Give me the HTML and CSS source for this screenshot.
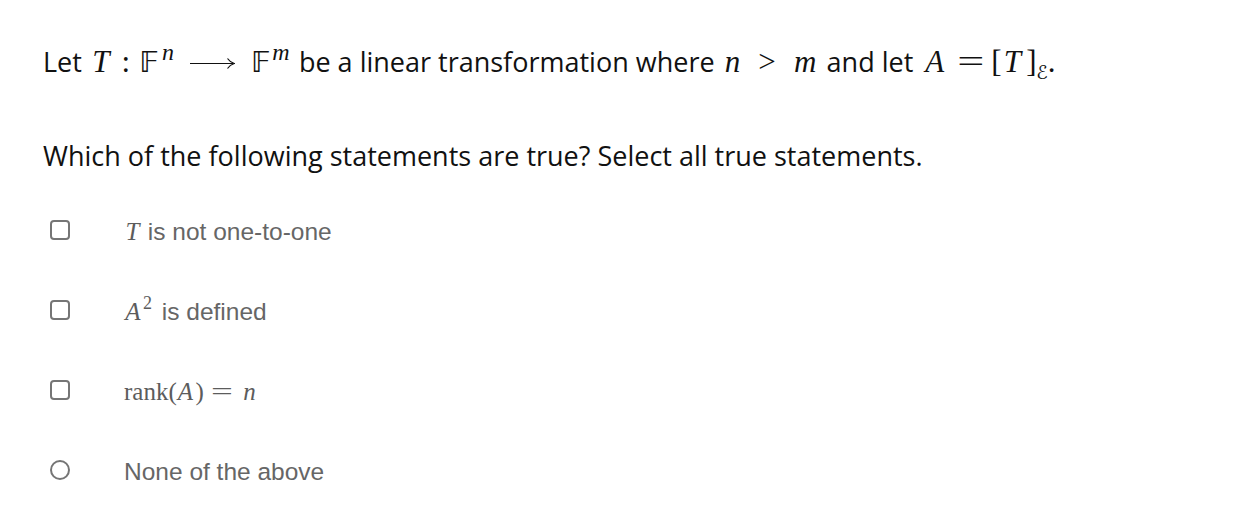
FILE: index.html
```html
<!DOCTYPE html>
<html>
<head>
<meta charset="utf-8">
<link rel="stylesheet" href="styles.css">
</head>
<body>
<div class="question">
  <p class="stem">Let <span class="m"><span class="g i w24">T</span><span class="g w26">:</span><span class="g bb w20">𝔽</span><span class="g sup i w18">n</span><span class="arrow"><svg width="45" height="14" viewBox="0 0 45 14"><path d="M0 7.5 H43.5" stroke="#111" stroke-width="1.2" fill="none"/><path d="M37.5 2.5 Q40 6.2 44.3 7.5 Q40 8.8 37.5 12.5" stroke="#111" stroke-width="1.2" fill="none"/></svg></span><span class="g bb w19">𝔽</span><span class="g sup i w22">m</span></span> be a linear transformation where <span class="m"><span class="g i w22">n</span><span class="g w47">&gt;</span><span class="g i w29">m</span></span> and let <span class="m"><span class="g i w29">A</span><span class="g w42"><span class="eq">=</span></span><span class="g w7">[</span><span class="g i w28">T</span><span class="g w7">]</span><span class="g cal">ℰ</span><span class="g w6">.</span></span></p>
  <p class="prompt">Which of the following statements are true? Select all true statements.</p>
  <ul class="options">
    <li class="option"><span class="box"></span><span class="label"><span class="om"><span class="g i w17">T</span></span> is not one-to-one</span></li>
    <li class="option"><span class="box"></span><span class="label"><span class="om"><span class="g i w18">A</span><span class="g osup w13">2</span></span> is defined</span></li>
    <li class="option"><span class="box"></span><span class="label"><span class="om">rank<span class="g w7">(</span><span class="g i w20">A</span><span class="g w7">)</span><span class="g w40"><span class="eq">=</span></span><span class="g i w14">n</span></span></span></li>
    <li class="option"><span class="box radio"></span><span class="label">None of the above</span></li>
  </ul>
</div>
</body>
</html>
```
FILE: styles.css
```css
body {
  margin: 0;
  background: #fff;
  font-family: "Open Sans", "Noto Sans", sans-serif;
  color: #111;
}
.question {
  padding: 44px 0 0 43px;
}
.stem {
  margin: 0;
  font-size: 27px;
  line-height: 36px;
  white-space: nowrap;
}
.prompt {
  margin: 58px 0 0 0;
  font-size: 27px;
  line-height: 36px;
}
.m {
  font-family: "Liberation Serif", "DejaVu Serif", serif;
  font-size: 31px;
  line-height: 0;
}
.g {
  display: inline-block;
  text-align: center;
  line-height: 0;
}
.i { font-style: italic; }
.eq { display: inline-block; transform: scaleX(1.55); }
.m .sup { font-size: 24px; vertical-align: 12px; }
.bb { font-family: "DejaVu Sans", sans-serif; font-size: 29px; }
.arrow { display: inline-block; margin: 0 16px 0 13px; line-height: 0; }
.arrow svg { vertical-align: 2px; }
.cal {
  font-family: "DejaVu Sans", sans-serif;
  font-size: 19px;
  vertical-align: -7px;
  margin-left: 3px;
}
.w6 { width: 6px; }
.w7 { width: 7px; }
.w8 { width: 8px; }
.w13 { width: 13px; }
.w14 { width: 14px; }
.w17 { width: 17px; }
.w18 { width: 18px; }
.w19 { width: 19px; }
.w20 { width: 20px; }
.w22 { width: 22px; }
.w24 { width: 24px; }
.w26 { width: 26px; }
.w28 { width: 28px; }
.w29 { width: 29px; }
.w40 { width: 40px; }
.w42 { width: 42px; }
.w47 { width: 47px; }
.options {
  list-style: none;
  margin: 16px 0 0 0;
  padding: 0;
}
.option {
  display: flex;
  align-items: center;
  height: 80px;
}
.box {
  width: 16px;
  height: 16px;
  border: 2px solid #757575;
  border-radius: 4px;
  margin-left: 7px;
  flex: none;
}
.box.radio {
  border-radius: 50%;
}
.label {
  margin-left: 54px;
  padding-top: 4px;
  font-family: "Liberation Sans", Arial, sans-serif;
  font-size: 24.5px;
  line-height: 28px;
  color: #666;
  white-space: nowrap;
}
.om {
  font-family: "Liberation Serif", "DejaVu Serif", serif;
  font-size: 25px;
  line-height: 0;
  color: #5c5c5c;
}
.osup { font-size: 18px; vertical-align: 11px; text-align: left; padding-left: 1px; box-sizing: border-box; }
```
